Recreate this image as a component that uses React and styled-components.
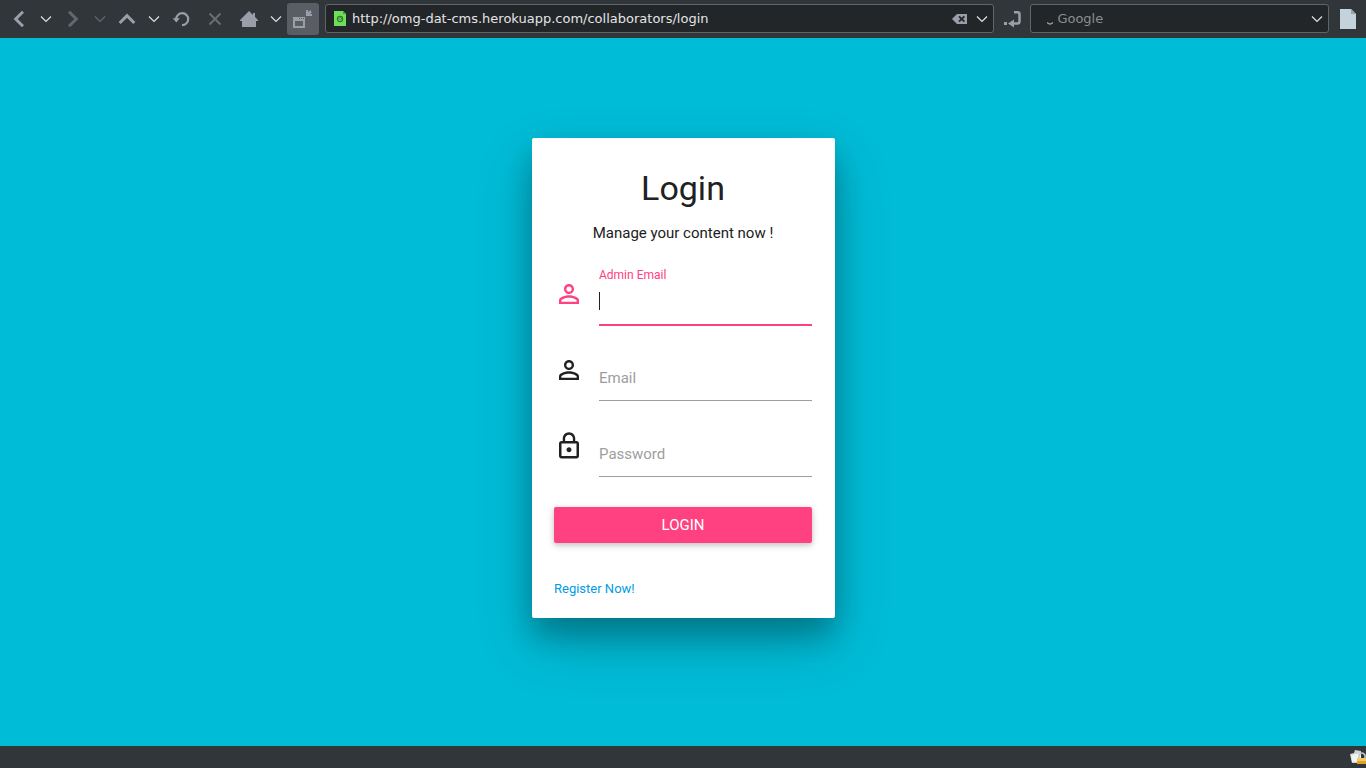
import React, { useState } from 'react';
import styled, { createGlobalStyle, css } from 'styled-components';
import { MdPersonOutline, MdLockOutline } from 'react-icons/md';

const GlobalStyle = createGlobalStyle`
  *, *::before, *::after {
    box-sizing: border-box;
  }

  body {
    margin: 0;
    font-family: Roboto, sans-serif;
    font-size: 15px;
    color: #212121;
  }
`;

const Page = styled.div`
  min-height: 100vh;
  display: flex;
  flex-direction: column;
  background: #00bcd7;
`;

const Toolbar = styled.header`
  display: flex;
  align-items: flex-start;
  height: 38px;
  padding: 3px 0 3px 3px;
  background: #31363b;
  font-family: 'DejaVu Sans', sans-serif;
`;

const NavGroup = styled.nav`
  display: flex;
  margin-right: ${({ $gap }) => $gap}px;
`;

const ToolButton = styled.button`
  display: flex;
  align-items: center;
  justify-content: center;
  flex: none;
  width: ${({ $narrow }) => ($narrow ? 22 : 32)}px;
  height: 32px;
  padding: 0;
  border: 0;
  border-radius: 3px;
  background: ${({ $active }) => ($active ? '#5a5d63' : 'transparent')};
  color: ${({ $tone }) => $tone || '#9a9ea9'};

  svg {
    display: block;
  }
`;

const EdgeButton = styled(ToolButton)`
  width: ${({ $wide }) => ($wide ? 37 : 36)}px;
`;

const BarField = styled.div`
  display: flex;
  align-items: center;
  flex: ${({ $grow }) => $grow} 1 0;
  min-width: 0;
  height: 29px;
  margin-top: 1px;
  border: 1px solid #616569;
  border-radius: 3px;
  background: #232629;

  > svg {
    flex: none;
    margin-left: ${({ $indent }) => $indent}px;
  }

  button {
    height: 27px;
  }
`;

const BarInput = styled.input`
  flex: 1;
  min-width: 0;
  padding: 0;
  margin-left: ${({ $offset }) => $offset}px;
  border: 0;
  outline: 0;
  background: transparent;
  color: #e3e4e5;
  font-family: inherit;
  font-size: 13px;
  line-height: 20px;

  &::placeholder {
    color: #8b8e91;
    opacity: 1;
  }
`;

const Main = styled.main`
  flex: 1;
  display: flex;
  align-items: flex-start;
  justify-content: center;
  padding: 100px 16px 64px 17px;
`;

const Card = styled.section`
  width: 100%;
  max-width: 303px;
  padding: 31px 23px 18px 22px;
  border-radius: 2px;
  background: #fff;
  box-shadow: 0 16px 28px 0 rgba(0, 0, 0, 0.22), 0 25px 55px 0 rgba(0, 0, 0, 0.21);
`;

const Title = styled.h1`
  margin: 0 0 15px;
  font-size: 34px;
  line-height: 38px;
  font-weight: 400;
  text-align: center;
`;

const Subtitle = styled.p`
  margin: 0 0 35px;
  line-height: 22px;
  text-align: center;
`;

const Form = styled.form`
  display: flex;
  flex-direction: column;
  gap: 30px;
`;

const Field = styled.div`
  display: flex;
  align-items: flex-start;
  color: ${({ $active }) => ($active ? '#ff4081' : '#212121')};
`;

const FieldIcon = styled.span`
  flex: none;
  width: 45px;
  font-size: 30px;

  svg {
    display: block;
  }
`;

const Control = styled.div`
  position: relative;
  flex: 1;
  min-width: 0;
`;

const FloatingLabel = styled.label`
  position: absolute;
  left: 0;
  top: 12px;
  color: #9e9e9e;
  font-size: 15px;
  line-height: 22px;
  pointer-events: none;

  ${({ $active }) =>
    $active &&
    css`
      top: -13px;
      color: #ff4081;
      font-size: 12px;
      line-height: 18px;
    `}
`;

const Caret = styled.span`
  position: absolute;
  left: 0;
  top: 13px;
  width: 1px;
  height: 18px;
  background: #212121;
`;

const TextInput = styled.input`
  display: block;
  width: 100%;
  height: 46px;
  padding: 0;
  border: 0;
  border-bottom: 1px solid #9e9e9e;
  border-radius: 0;
  outline: 0;
  background: transparent;
  color: #212121;
  font: inherit;

  ${({ $active }) =>
    $active &&
    css`
      border-bottom-color: #ff4081;
      box-shadow: 0 1px 0 0 #ff4081;
      caret-color: transparent;
    `}
`;

const SubmitButton = styled.button`
  height: 36px;
  border: 0;
  border-radius: 2px;
  background: #ff4081;
  box-shadow: 0 2px 5px 0 rgba(0, 0, 0, 0.16), 0 2px 10px 0 rgba(0, 0, 0, 0.12);
  color: #fff;
  font-family: inherit;
  font-size: 15px;
  text-transform: uppercase;
`;

const RegisterLink = styled.a`
  display: block;
  margin-top: 35px;
  color: #039be5;
  font-size: 13px;
  line-height: 22px;
  text-decoration: none;
`;

const StatusBar = styled.footer`
  display: flex;
  justify-content: flex-end;
  align-items: center;
  height: 22px;
  background: #31363b;
`;

const SmallChevron = () => (
  <svg width="12" height="8" viewBox="0 0 12 8" fill="none" stroke="currentColor" strokeWidth="1.2">
    <path d="M1 1.5l5 5 5-5" />
  </svg>
);

const BigChevron = ({ turn }) => (
  <svg width="18" height="18" viewBox="0 0 18 18" fill="none" stroke="currentColor" strokeWidth="3">
    <path d="M13 1.7L5.7 9l7.3 7.3" transform={`rotate(${turn} 9 9)`} />
  </svg>
);

const ReloadIcon = () => (
  <svg width="18" height="18" viewBox="0 0 18 18">
    <path d="M4.2 9.2a6 6 0 1 1 5.8 6" fill="none" stroke="currentColor" strokeWidth="2.2" />
    <path d="M.7 8.2h7.1l-3.5 4.4z" fill="currentColor" />
  </svg>
);

const StopIcon = () => (
  <svg width="14" height="14" viewBox="0 0 14 14" fill="none" stroke="currentColor" strokeWidth="2">
    <path d="M1.5 1.5l11 11M12.5 1.5l-11 11" />
  </svg>
);

const HomeIcon = () => (
  <svg width="18" height="16" viewBox="0 0 18 16" fill="currentColor">
    <path d="M9 0l4 4V2h2v4l3 3v1h-2v6H2v-6H0V9z" />
  </svg>
);

const WindowIcon = () => (
  <svg width="20" height="20" viewBox="0 0 20 20">
    <path fill="currentColor" fillRule="evenodd" d="M0 8h12v11H0zm2 4v5h8v-5z" />
    <path fill="#5a5d63" d="M6 9h1v1H6zm2 0h1v1H8zm2 0h1v1h-1z" />
    <path fill="currentColor" d="M13 1h2v2l3-2v2h1l-2 2h2v2h-6z" />
  </svg>
);

const SiteIcon = () => (
  <svg width="12" height="15" viewBox="0 0 12 15">
    <path fill="#6fdc5b" d="M0 0h9l3 3v12H0z" />
    <path fill="#479e3c" d="M9 0l3 3H9z" />
    <circle cx="6" cy="8" r="2.6" fill="none" stroke="#2f7b2b" strokeWidth="1.2" />
    <path d="M4.5 7l2 2M6.5 6l1.5 2" stroke="#2f7b2b" />
  </svg>
);

const ClearIcon = () => (
  <svg width="16" height="10" viewBox="0 0 16 10">
    <path fill="currentColor" d="M0 5l5-5h10v10H5z" />
    <path stroke="#232629" strokeWidth="1.8" d="M7 2.3l5.4 5.4M12.4 2.3L7 7.7" />
  </svg>
);

const GoIcon = () => (
  <svg width="18" height="18" viewBox="0 0 18 18">
    <path fill="currentColor" d="M1 12h3v3H1zM5 13.500l6-4v8z" />
    <path fill="none" stroke="currentColor" strokeWidth="2.5" d="M11 2.200h3.500q2 0 2 2v7q0 2.300-2 2.300H10" />
  </svg>
);

const SearchMark = () => (
  <svg width="6" height="16" viewBox="0 0 6 16" fill="none" stroke="#a5a8ab" strokeWidth="1.2">
    <path d="M0 11.500q3 3.200 6 0" />
  </svg>
);

const DocumentIcon = () => (
  <svg width="16" height="20" viewBox="0 0 16 20">
    <path fill="#c3d2db" d="M0 0h11l5 5v15H0z" />
    <path fill="#93a3ad" d="M11 0l5 5h-5z" />
  </svg>
);

const SecurityIcon = () => (
  <svg width="16" height="16" viewBox="0 0 16 16">
    <path fill="#cfd1d2" d="M0 5l4-1 1-3 6 1v12H2z" />
    <path fill="#f2f2f2" d="M1 6l10-2v9H2z" />
    <path d="M9 10V6q3-4 6 0v4" fill="none" stroke="#c4c6c8" strokeWidth="1.6" />
    <path fill="#dfa32a" d="M7 9h9v6H7z" />
    <path fill="#f4cc62" d="M7 9h9v3H7z" />
  </svg>
);

const fields = [
  { id: 'admin-email', label: 'Admin Email', type: 'email', icon: MdPersonOutline, active: true },
  { id: 'email', label: 'Email', type: 'email', icon: MdPersonOutline },
  { id: 'password', label: 'Password', type: 'password', icon: MdLockOutline }
];

const BrowserToolbar = () => {
  const [url, setUrl] = useState('http://omg-dat-cms.herokuapp.com/collaborators/login');

  return (
    <Toolbar>
      <NavGroup $gap={2} aria-label="History">
        <ToolButton aria-label="Back"><BigChevron turn={0} /></ToolButton>
        <ToolButton $narrow $tone="#dfe1e3" aria-label="Back history"><SmallChevron /></ToolButton>
        <ToolButton $tone="#64686e" aria-label="Forward"><BigChevron turn={180} /></ToolButton>
        <ToolButton $narrow $tone="#64686e" aria-label="Forward history"><SmallChevron /></ToolButton>
        <ToolButton aria-label="Up"><BigChevron turn={90} /></ToolButton>
        <ToolButton $narrow $tone="#dfe1e3" aria-label="Parent pages"><SmallChevron /></ToolButton>
        <ToolButton aria-label="Reload"><ReloadIcon /></ToolButton>
      </NavGroup>
      <NavGroup $gap={2} aria-label="Loading">
        <ToolButton $tone="#6a6d71" aria-label="Stop"><StopIcon /></ToolButton>
      </NavGroup>
      <NavGroup $gap={6} aria-label="Pages">
        <ToolButton aria-label="Home"><HomeIcon /></ToolButton>
        <ToolButton $narrow $tone="#dfe1e3" aria-label="Home pages"><SmallChevron /></ToolButton>
        <ToolButton $active aria-label="Full screen"><WindowIcon /></ToolButton>
      </NavGroup>
      <BarField $grow={9} $indent={8}>
        <SiteIcon />
        <BarInput
          $offset={6}
          aria-label="Address"
          value={url}
          onChange={(e) => setUrl(e.target.value)}
        />
        <ToolButton $narrow aria-label="Clear address" onClick={() => setUrl('')}><ClearIcon /></ToolButton>
        <ToolButton $narrow $tone="#dfe1e3" aria-label="Address history"><SmallChevron /></ToolButton>
      </BarField>
      <EdgeButton aria-label="Go"><GoIcon /></EdgeButton>
      <BarField $grow={4} $indent={16}>
        <SearchMark />
        <BarInput $offset={4} aria-label="Search" placeholder="Google" />
        <ToolButton $narrow $tone="#dfe1e3" aria-label="Search engines"><SmallChevron /></ToolButton>
      </BarField>
      <EdgeButton $wide aria-label="New document"><DocumentIcon /></EdgeButton>
    </Toolbar>
  );
};

const LoginCard = () => (
  <Card>
    <Title>Login</Title>
    <Subtitle>Manage your content now !</Subtitle>
    <Form onSubmit={(e) => e.preventDefault()}>
      {fields.map(({ id, label, type, icon: Icon, active }) => (
        <Field key={id} $active={active}>
          <FieldIcon><Icon /></FieldIcon>
          <Control>
            <TextInput id={id} type={type} $active={active} />
            <FloatingLabel htmlFor={id} $active={active}>{label}</FloatingLabel>
            {active && <Caret />}
          </Control>
        </Field>
      ))}
      <SubmitButton type="submit">Login</SubmitButton>
    </Form>
    <RegisterLink href="#register">Register Now!</RegisterLink>
  </Card>
);

const App = () => {
  return (
    <Page>
      <GlobalStyle />
      <BrowserToolbar />
      <Main>
        <LoginCard />
      </Main>
      <StatusBar>
        <SecurityIcon />
      </StatusBar>
    </Page>
  );
};

export default App;
